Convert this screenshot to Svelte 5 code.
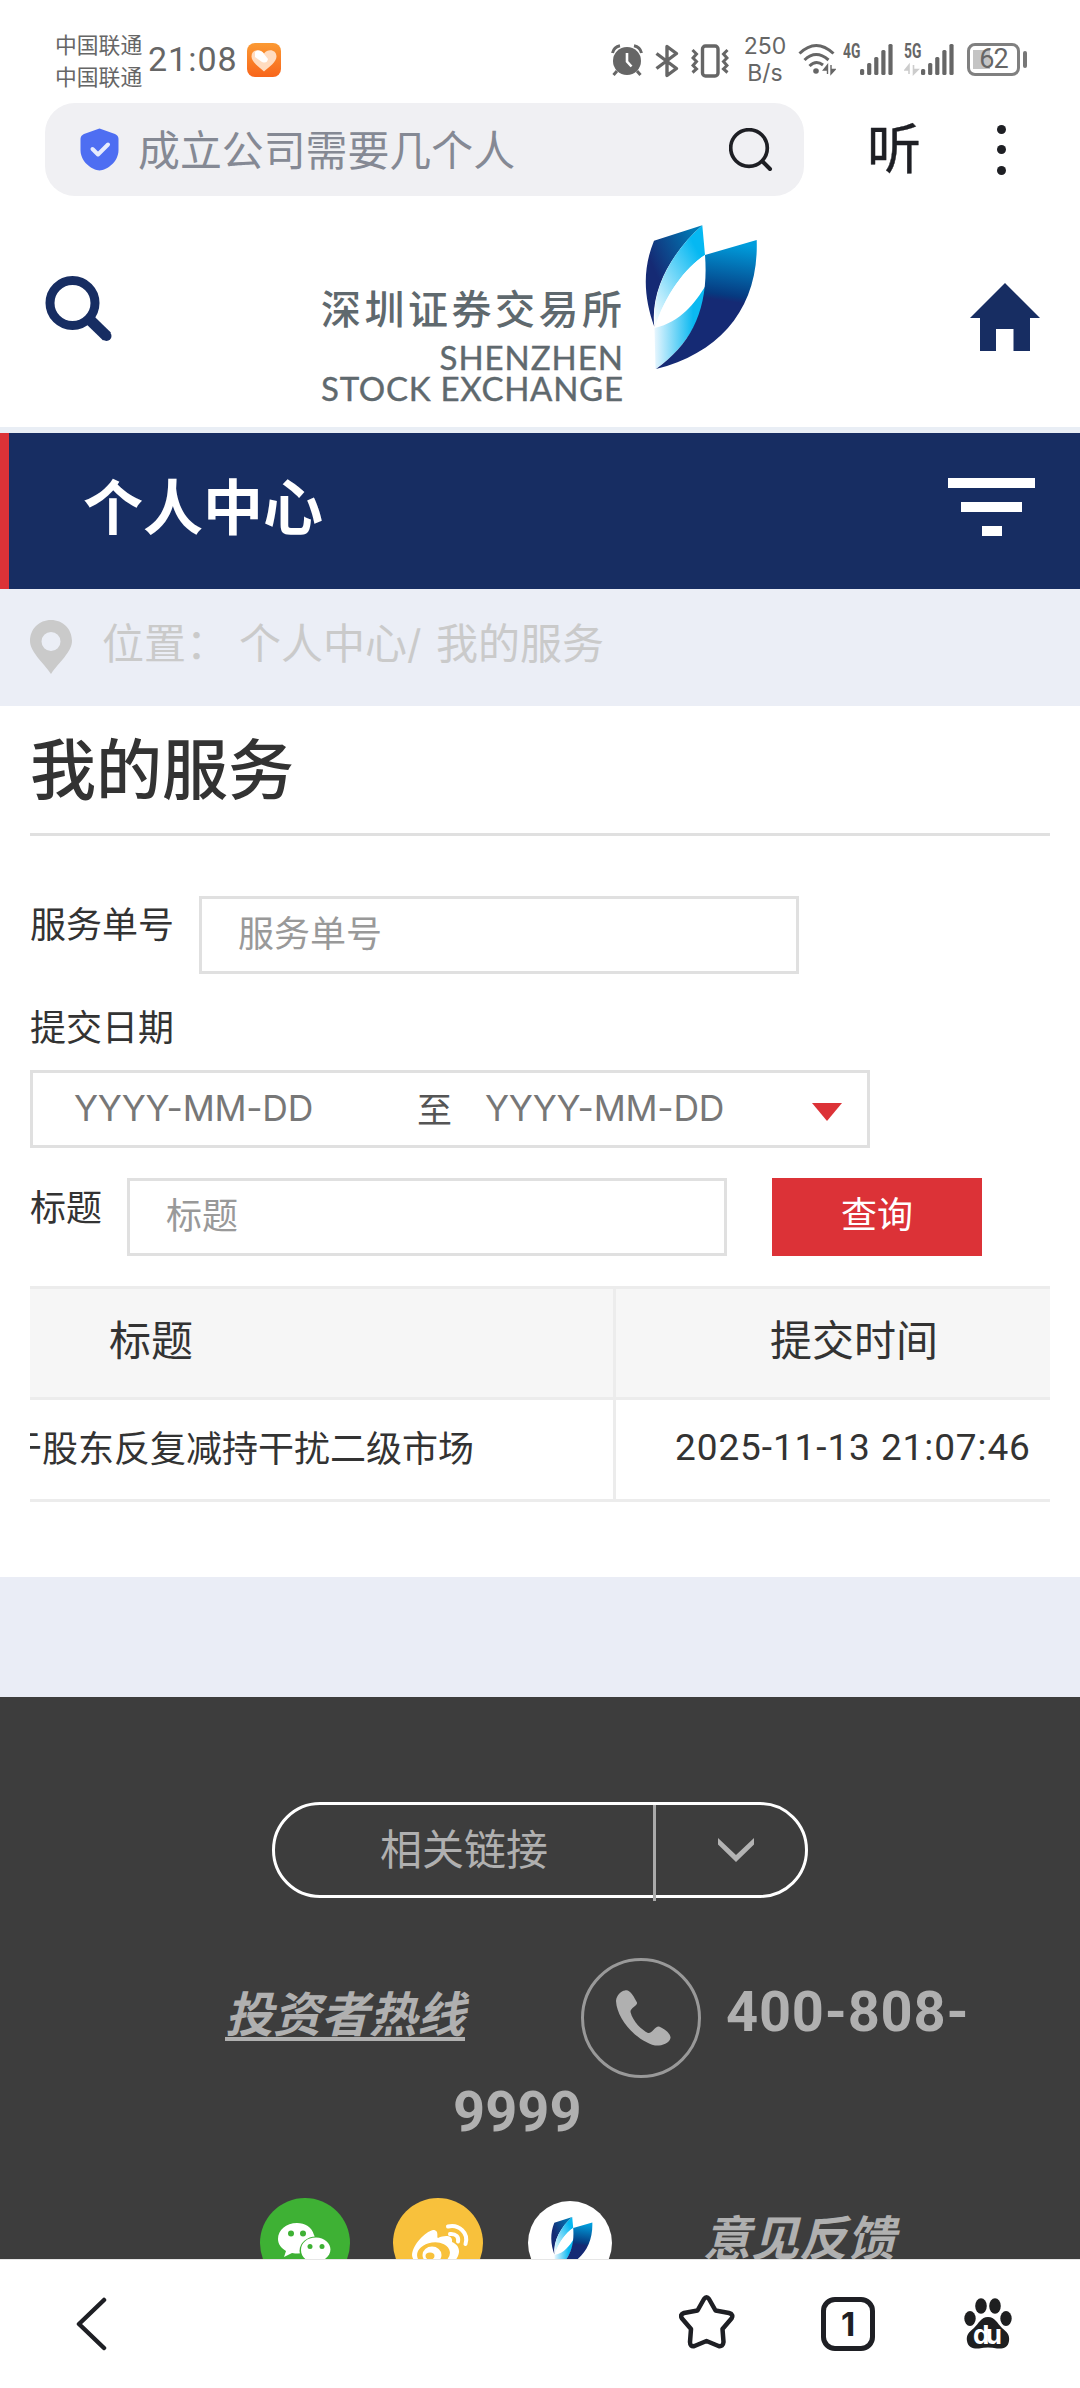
<script>
  const columns = ['标题', '提交时间'];
  const rows = [{ title: '于股东反复减持干扰二级市场', time: '2025-11-13 21:07:46' }];
  const bars = [6, 12, 18, 25, 31];
</script>

{#snippet emblem()}
  <path d="M9 15.7L57.3.3C27 27 5 65 9.300 101.700C-1 73-3 45 9 15.700Z" fill="url(#leafDark)" />
  <path d="M57.3.3L60 30C40 43 20 70 10.300 102.500C5 65 27 27 57.300.3Z" fill="url(#leafCyan)" />
  <path d="M60 30C40 43 20 70 9.500 103C35 99 48 76 61 58Z" fill="#fff" />
  <path d="M61 60C50 78 36 97 9.500 103L10.500 144C40 124 60 92 61 60Z" fill="url(#leafLow)" />
  <path d="M60 30L111.700 15C114 82 76 128 11 144C48 118 64 82 60 30Z" fill="url(#leafBig)" />
{/snippet}

<div class="screen">
  <svg class="defs" width="0" height="0" aria-hidden="true">
    <defs>
      <linearGradient id="leafDark" x1="0.8" y1="0" x2="0.2" y2="0.5">
        <stop offset="0" stop-color="#0078b4" /><stop offset="1" stop-color="#152a74" />
      </linearGradient>
      <linearGradient id="leafCyan" x1="0.8" y1="0.2" x2="0.1" y2="1">
        <stop offset="0" stop-color="#05b8f2" /><stop offset="1" stop-color="#f2fbff" />
      </linearGradient>
      <linearGradient id="leafLow" x1="0" y1="0" x2="1" y2="0">
        <stop offset="0" stop-color="#e8f6fe" /><stop offset="0.75" stop-color="#0bb9f1" />
      </linearGradient>
      <linearGradient id="leafBig" x1="0.55" y1="0" x2="0.5" y2="0.45">
        <stop offset="0" stop-color="#009ddc" /><stop offset="0.9" stop-color="#063a80" /><stop offset="1" stop-color="#152a74" />
      </linearGradient>
      <linearGradient id="heartBg" x1="0" y1="0" x2="0" y2="1">
        <stop offset="0" stop-color="#fb9a33" /><stop offset="1" stop-color="#f8651b" />
      </linearGradient>
    </defs>
  </svg>

  <header class="status">
    <div class="carriers"><span>中国联通</span><span>中国联通</span></div>
    <span class="clock">21:08</span>
    <svg class="heart" width="34" height="34" viewBox="0 0 34 34">
      <rect width="34" height="34" rx="8" fill="url(#heartBg)" />
      <path d="M17 28.500C12 24 4.500 19 4.500 13.500C4.500 6.500 13 5 17 10.500C21 5 29.500 6.500 29.500 13.500C29.500 19 22 24 17 28.500Z" fill="#ffdcc0" />
      <path d="M8 9C11 6 15 8 17 11L21 16Q20 21 15 19L8 14Z" fill="#fff" />
    </svg>
    <div class="tray">
      <svg class="alarm" width="32" height="32" viewBox="0 0 32 32">
        <circle cx="16" cy="17" r="14" fill="#666" />
        <path d="M1.500 9Q3 3 9 1.800M30.500 9Q29 3 23 1.800M6 27L2.500 31M26 27L29.500 31" stroke="#666" stroke-width="3" fill="none" />
        <path d="M16 9V17.500L20.500 22.500" stroke="#fff" stroke-width="2.600" fill="none" />
      </svg>
      <svg class="bt" width="24" height="34" viewBox="0 0 24 34">
        <path d="M1.500 9.500L21.500 24.500L12 31.500V2.500L21.500 9.500L1.500 24.500" fill="none" stroke="#666" stroke-width="3.400" stroke-linejoin="round" />
      </svg>
      <svg class="vib" width="38" height="34" viewBox="0 0 38 34">
        <rect x="11.500" y="2" width="15.500" height="30" rx="3" fill="none" stroke="#666" stroke-width="3.400" />
        <path d="M1.500 6L5.500 10L2 14L5.500 17.500L2 21.500L5.500 25L1.500 28.500M36.500 6L32.500 10L36 14L32.500 17.500L36 21.500L32.500 25L36.500 28.500" fill="none" stroke="#666" stroke-width="3" />
      </svg>
      <div class="speed"><span>250</span><span>B/s</span></div>
      <svg class="wifi" width="38" height="34" viewBox="0 0 38 34">
        <g fill="none" stroke="#666" stroke-width="3">
          <path d="M1.500 10.500Q18 -5.500 35.500 10.500" /><path d="M6.500 17Q18 6 30.500 17" /><path d="M11.500 23Q18 16.500 25 22" />
        </g>
        <circle cx="18" cy="28" r="2.800" fill="#666" />
        <path d="M29.500 31V22L25.500 27H29.500M33 22V31L37 26.500H33" fill="#666" stroke="#666" stroke-width="1.400" />
      </svg>
      {#each ['4G', '5G'] as net, n}
        <div class="signal" class:second={n === 1}>
          <span>{net}</span>
          <svg width="50" height="34" viewBox="0 0 50 34">
            {#if n === 1}
              <path d="M5 31V22L1 27H5M9.500 22V31L14 26.500H9.500" fill="#ccc" stroke="#ccc" stroke-width="1.600" />
            {/if}
            {#each bars as h, i}
              <rect x={17 + i * 7.1} y={32 - h} width="4.2" height={h} rx="1.5" fill="#666" />
            {/each}
          </svg>
        </div>
      {/each}
      <div class="battery"><b>62</b></div>
      <i class="nub"></i>
    </div>
  </header>

  <div class="browser">
    <div class="omnibox">
      <svg width="39" height="43" viewBox="0 0 39 43">
        <path d="M19.500.5L35 6Q38.500 7.500 38.500 11V22C38.500 34 27 42 19.500 42.500C12 42 .5 34 .5 22V11Q.5 7.500 4 6Z" fill="#4e6ef2" />
        <path d="M12.500 21L18 26.500L28 16.500" fill="none" stroke="#e6ebfd" stroke-width="4" stroke-linecap="round" stroke-linejoin="round" />
      </svg>
      <span>成立公司需要几个人</span>
      <svg class="lens" width="44" height="44" viewBox="0 0 44 44">
        <circle cx="20" cy="20" r="18.300" fill="none" stroke="#1e1f24" stroke-width="3.700" />
        <path d="M33.500 33.500L41 41" stroke="#1e1f24" stroke-width="4" stroke-linecap="round" />
      </svg>
    </div>
    <span class="listen">听</span>
    <div class="dots"><i></i><i></i><i></i></div>
  </div>

  <div class="site">
    <svg class="find" width="68" height="68" viewBox="0 0 68 68">
      <circle cx="27.500" cy="27" r="22.500" fill="none" stroke="#172d62" stroke-width="9" />
      <path d="M44 43L62 60.500" stroke="#172d62" stroke-width="11" />
      <circle cx="61.500" cy="60" r="5" fill="#172d62" />
    </svg>
    <svg class="logo" width="440" height="190" viewBox="0 0 440 190">
      <g fill="#5f696e">
        <text class="cn" x="1" y="104" textLength="301">深圳证券交易所</text>
        <text class="en" x="119.500" y="150" textLength="183.500">SHENZHEN</text>
        <text class="en" x="1" y="180.500" textLength="302">STOCK EXCHANGE</text>
      </g>
      <g transform="translate(325 5)">{@render emblem()}</g>
    </svg>
    <svg class="home" width="70" height="68" viewBox="0 0 70 68">
      <path d="M35 0L70 35H60V68H43.500V46H26V68H10V35H0Z" fill="#172d62" />
    </svg>
  </div>

  <div class="banner">
    <h1>个人中心</h1>
    <div class="filter"><i></i><i></i><i></i></div>
  </div>

  <nav class="crumbs">
    <svg width="42" height="54" viewBox="0 0 42 54">
      <path fill-rule="evenodd" d="M21 0C9 0 0 9 0 21C0 32 13 42 21 54C29 42 42 32 42 21C42 9 33 0 21 0ZM21 12A9.500 9.500 0 1 1 21 31A9.500 9.500 0 1 1 21 12Z" fill="#cacaca" />
    </svg>
    <span class="where">位置：</span><span class="trail">个人中心<em>/</em></span><span>我的服务</span>
  </nav>

  <main>
    <h2>我的服务</h2>
    <div class="field number"><label for="no">服务单号</label><input id="no" placeholder="服务单号" /></div>
    <div class="datelabel">提交日期</div>
    <div class="dates">
      <span class="ymd">YYYY-MM-DD</span><span class="to">至</span><span class="ymd">YYYY-MM-DD</span>
      <svg width="30" height="18" viewBox="0 0 30 18"><path d="M0 0H30L15 18Z" fill="#dc3237" /></svg>
    </div>
    <div class="field subject">
      <label for="subject">标题</label><input id="subject" placeholder="标题" /><button>查询</button>
    </div>
    <div class="table">
      <div class="tr head">{#each columns as c}<div>{c}</div>{/each}</div>
      {#each rows as r}
        <div class="tr"><div><span>{r.title}</span></div><div>{r.time}</div></div>
      {/each}
    </div>
  </main>

  <footer>
    <div class="links">
      <span>相关链接</span>
      <i></i>
      <svg width="36" height="24" viewBox="0 0 36 24"><path d="M0 0L18 17L36 0V6.500L18 24L0 6.500Z" fill="#b3b3b3" /></svg>
    </div>
    <div class="hotline">
      <a href="#hotline">投资者热线</a>
      <svg width="120" height="120" viewBox="0 0 120 120">
        <circle cx="60" cy="60" r="58.500" fill="none" stroke="#999" stroke-width="3" />
        <path d="M44 32.500C49 31 53 39 56 44.500C57 48 49 50 49.500 54C52 64 61 72 67 75C71 76 74 68 78 68.500C84 71 90 76 89.500 80C88 86 80 88 74 87.500C56 83 36 62 35 43C35.500 37 40 33 44 32.500Z" fill="#b0b0b0" />
      </svg>
      <b>400-808-</b>
    </div>
    <b class="rest">9999</b>
    <div class="social">
      <svg width="90" height="90" viewBox="0 0 90 90">
        <circle cx="45" cy="45" r="45" fill="#3eb134" />
        <path d="M37 25C26 25 18 32 18 41C18 46 21 50 26 53L24 59L32 55C56 59 56 39 54 37C52 29 45 25 37 25Z" fill="#fff" />
        <ellipse cx="56" cy="53" rx="16.500" ry="14.500" fill="#3eb134" />
        <path d="M56 39.500C47 39.500 41 45 41 52C41 62 52 66 60 63L66 66L65 61C76 53 69 39.500 56 39.500Z" fill="#fff" />
        <g fill="#3eb134"><circle cx="31" cy="35.500" r="3" /><circle cx="43" cy="35.500" r="3" /><circle cx="50" cy="48.500" r="2.500" /><circle cx="62" cy="48.500" r="2.500" /></g>
      </svg>
      <svg width="90" height="90" viewBox="0 0 90 90">
        <circle cx="45" cy="45" r="45" fill="#f8c13c" />
        <path d="M40 32C47 32 43 40 45 40C52 37 60 37 59 44C66 47 68 53 64 60C54 75 19 70 19 57C20 46 32 34 40 32Z" fill="#fff" />
        <ellipse cx="40.500" cy="56" rx="16.500" ry="11.500" fill="#f8c13c" transform="rotate(-8 40.500 56)" />
        <ellipse cx="39" cy="57" rx="9.500" ry="8.500" fill="#fff" /><ellipse cx="37" cy="58" rx="4.500" ry="3.500" fill="#f8c13c" />
        <path d="M55 28.500C66 26 76 35 72.500 46M57 36C63 35.500 66 39 65 43.500" fill="none" stroke="#fff" stroke-width="4" stroke-linecap="round" />
      </svg>
      <svg class="szse" width="84" height="84" viewBox="0 0 84 84">
        <circle cx="42" cy="42" r="42" fill="#fff" />
        <g transform="translate(23 16) scale(.37)">{@render emblem()}</g>
      </svg>
      <a href="#feedback">意见反馈</a>
    </div>
  </footer>

  <div class="toolbar">
    <svg class="back" width="32" height="54" viewBox="0 0 32 54"><path d="M29 3L4 27L29 51" fill="none" stroke="#1e1f24" stroke-width="4.500" stroke-linecap="round" stroke-linejoin="round" /></svg>
    <svg class="star" width="56" height="54" viewBox="0 0 56 54">
      <path d="M25 4Q27.500.5 30 4L36.500 15.500L50 18Q55 19.500 52.500 23.500L43.500 34L44.500 47Q44 52 39.500 51L27.500 46L15.500 51Q11 52 11 47L12 34L3 23.500Q.5 19.500 5 18L18.500 15.500Z" fill="none" stroke="#1e1f24" stroke-width="4.500" stroke-linejoin="round" />
    </svg>
    <div class="tabs">1</div>
    <svg class="paw" width="48" height="52" viewBox="0 0 48 52">
      <g fill="#1e1f20">
        <ellipse cx="6" cy="20.500" rx="5.700" ry="7.500" /><ellipse cx="17" cy="8" rx="5.800" ry="7.800" /><ellipse cx="31" cy="8" rx="5.800" ry="7.800" /><ellipse cx="42" cy="20.500" rx="5.700" ry="7.500" />
        <path d="M24 19C17 19 15 25 10 30C5 34 2 37 3 43C4 50 10 51 15 50.500C21 49 27 49 33 50.500C39 51 44 50 45 43C46 37 43 34 38 30C33 25 31 19 24 19Z" />
      </g>
      <text x="9" y="46" textLength="29">du</text>
    </svg>
  </div>
</div>

<style>
  :global(body) { margin: 0; background: #fff; }
  .screen {
    width: 1080px; height: 2388px; overflow: hidden; display: flex; flex-direction: column;
    font-family: "Noto Sans CJK SC", sans-serif; color: #333; background: #fff;
  }
  .screen *, .screen { box-sizing: border-box; }
  svg { display: block; flex: none; }
  .defs { position: absolute; }
  span, a, b { white-space: nowrap; }

  .status { height: 103px; flex: none; display: flex; align-items: flex-start; color: #666; padding-left: 55px; }
  .carriers { width: 93px; padding-top: 28px; display: flex; flex-direction: column; font-size: 21.800px; line-height: 32px; }
  .clock { width: 99px; margin-top: 39px; font: 34px/40px Roboto, sans-serif; letter-spacing: 1px; }
  .heart { margin-top: 43px; }
  .tray { display: flex; align-items: flex-start; margin-left: 330px; padding-top: 43px; }
  .alarm { margin-top: 1px; }
  .bt { margin: 1px 0 0 12px; }
  .vib { margin: 1px 0 0 12px; }
  .speed { width: 44px; margin: -10px 0 0 14px; display: flex; flex-direction: column; align-items: center; font: 23px/27px Inter, sans-serif; }
  .wifi { margin-left: 11px; }
  .signal { width: 50px; margin-left: 7px; display: grid; }
  .signal.second { margin-left: 11px; }
  .signal span, .signal svg { grid-area: 1 / 1; }
  .signal span { font: 700 20px/16px Roboto, sans-serif; transform: scaleX(.69); transform-origin: left; height: 16px; }
  .battery { width: 53px; height: 33px; margin-left: 13px; border: 3px solid #808080; border-radius: 8px; background: linear-gradient(90deg, #c4c4c4 17px, #fff 17px) 3px 4px / 40px 19px no-repeat; text-align: center; }
  .battery b { font: 400 27px/27px Roboto, sans-serif; display: block; letter-spacing: -1px; }
  .nub { width: 4px; height: 17px; border-radius: 2px; background: #777; margin: 8px 0 0 3px; }

  .browser { height: 93px; flex: none; display: flex; align-items: center; padding-left: 45px; }
  .omnibox { width: 759px; height: 93px; border-radius: 30px; background: #f0f0f3; display: flex; align-items: center; padding-left: 35px; }
  .omnibox span { margin-left: 19px; font-size: 41.900px; line-height: 60px; color: #858994; width: 591px; position: relative; top: -2px; }
  .listen { margin-left: 63px; font-size: 54px; line-height: 60px; font-weight: 400; color: #1e1f24; -webkit-text-stroke: .4px #1e1f24; width: 130px; position: relative; top: -4px; }
  .dots { display: flex; flex-direction: column; gap: 11.500px; }
  .dots i { width: 9px; height: 9px; border-radius: 50%; background: #1e1f24; }

  .site { height: 237px; flex: none; display: flex; align-items: flex-start; border-bottom: 6px solid #e9eef5; padding-left: 45px; }
  .find { margin-top: 80px; }
  .logo { margin: 24px 0 0 207px; overflow: hidden; }
  .cn { font-size: 40px; font-weight: 500; }
  .en { font-family: Lato, sans-serif; font-size: 33px; stroke: #5f696e; stroke-width: .4px; }
  .home { margin: 87px 0 0 210px; }

  .banner { height: 156px; flex: none; background: #172d62; border-left: 9px solid #dc3237; display: flex; justify-content: space-between; padding: 0 45px 0 74px; }
  h1 { margin: 28px 0 0; font-size: 60px; line-height: 86px; font-weight: 700; color: #fff; }
  .filter { display: flex; flex-direction: column; align-items: center; gap: 14px; padding-top: 45px; }
  .filter i { height: 10px; width: 87px; background: #fff; }
  .filter i:nth-child(2) { width: 61px; }
  .filter i:nth-child(3) { width: 20px; }

  .crumbs { height: 117px; flex: none; background: #ebeef6; display: flex; padding: 22px 0 0 30px; font-size: 42px; line-height: 60px; color: #cacaca; }
  .crumbs svg { margin-top: 9px; }
  .where { margin-left: 30px; width: 137px; }
  .trail { width: 197px; }
  em { font: 400 40px Inter, sans-serif; }

  main { height: 871px; flex: none; padding: 0 30px; }
  h2 { margin: 0; height: 130px; border-bottom: 3px solid #e0e0e0; font-size: 66px; line-height: 119px; font-weight: 500; }
  .field { display: flex; font-size: 36px; line-height: 52px; }
  .number { margin-top: 60px; }
  label { margin-top: 0; }
  input { height: 78px; width: 600px; border: 3px solid #e0e0e0; padding: 0 0 8px 36px; margin: 0 0 0 25px; font: 36px "Noto Sans CJK SC", sans-serif; outline: 0; border-radius: 0; }
  input::placeholder { color: #999; opacity: 1; }
  .datelabel { margin-top: 25px; font-size: 36px; line-height: 52px; }
  .dates { margin-top: 19px; width: 840px; height: 78px; border: 3px solid #e0e0e0; display: flex; align-items: center; padding-left: 41px; font-size: 35px; color: #555; }
  .ymd { font-family: Inter, sans-serif; font-size: 35.500px; letter-spacing: -.25px; color: #777; width: 240px; line-height: 60px; }
  .to { margin: 0 33px 0 103px; position: relative; top: -2px; }
  .dates svg { margin: 5px 0 0 87px; }
  .subject { margin-top: 30px; }
  .subject label { margin-top: 1px; }
  button { border: 0; margin: 0 0 0 45px; width: 210px; height: 78px; background: #dc3237; color: #fff; font: 36px "Noto Sans CJK SC", sans-serif; padding: 0 0 11px; }

  .table { margin-top: 30px; border-top: 3px solid #ececec; overflow: hidden; }
  .tr { display: grid; grid-template-columns: 586px 434px; height: 102px; border-bottom: 3px solid #ececec; font-size: 36px; line-height: 92px; }
  .tr.head { height: 111px; background: #f6f6f6; font-size: 42px; line-height: 98px; }
  .tr div:first-child { border-right: 3px solid #ececec; overflow: hidden; }
  .head div:first-child { padding-left: 79px; }
  .head div:last-child { padding-left: 154px; }
  .tr div:first-child span { margin-left: -24px; }
  .tr:not(.head) div:last-child { padding-left: 59px; font-family: Roboto, sans-serif; font-size: 37px; letter-spacing: .9px; line-height: 96px; white-space: nowrap; }

  footer { margin-top: 120px; height: 562px; flex: none; background: #3d3d3d; color: #b0b0b0; overflow: hidden; padding-top: 105px; box-shadow: 0 -120px #eaedf6; }
  .links { width: 536px; height: 96px; margin-left: 272px; border: 3px solid #fff; border-radius: 48px; display: flex; font-size: 42px; line-height: 84px; padding-left: 105px; }
  .links span { width: 273px; }
  .links i { width: 3px; height: 96px; background: #aaa; }
  .links svg { margin: 33px 0 0 62px; }
  .hotline { height: 120px; margin-top: 60px; padding-left: 225px; display: flex; }
  a { color: inherit; font-style: italic; font-weight: 700; font-size: 48px; line-height: 70px; }
  .hotline a { margin-top: 18px; width: 356px; text-decoration: underline; text-decoration-thickness: 4px; text-underline-offset: 5px; text-decoration-skip-ink: none; }
  b { font: 700 56px/80px Roboto, sans-serif; }
  .hotline b { margin: 14px 0 0 25px; letter-spacing: .8px; }
  .rest { display: block; margin-left: 453px; line-height: 68px; height: 68px; }
  .social { margin-top: 52px; display: flex; padding-left: 260px; }
  .social svg + svg { margin-left: 43px; }
  .social svg.szse { margin: 3px 0 0 45px; }
  .social a { margin: 2px 0 0 91px; }

  .toolbar { height: 129px; flex: none; border-top: 1px solid #e6e6e6; background: #fff; display: flex; padding-left: 75px; }
  .back { margin-top: 37px; }
  .star { margin: 35px 0 0 572px; }
  .tabs { width: 54px; height: 54px; margin: 37px 0 0 86px; border: 5px solid #1e1f24; border-radius: 14px; font: 700 33px/44px Inter, sans-serif; text-align: center; color: #1e1f24; }
  .paw { margin: 38px 0 0 89px; }
  .paw text { font: 700 26px Inter, sans-serif; fill: #fff; }
</style>
